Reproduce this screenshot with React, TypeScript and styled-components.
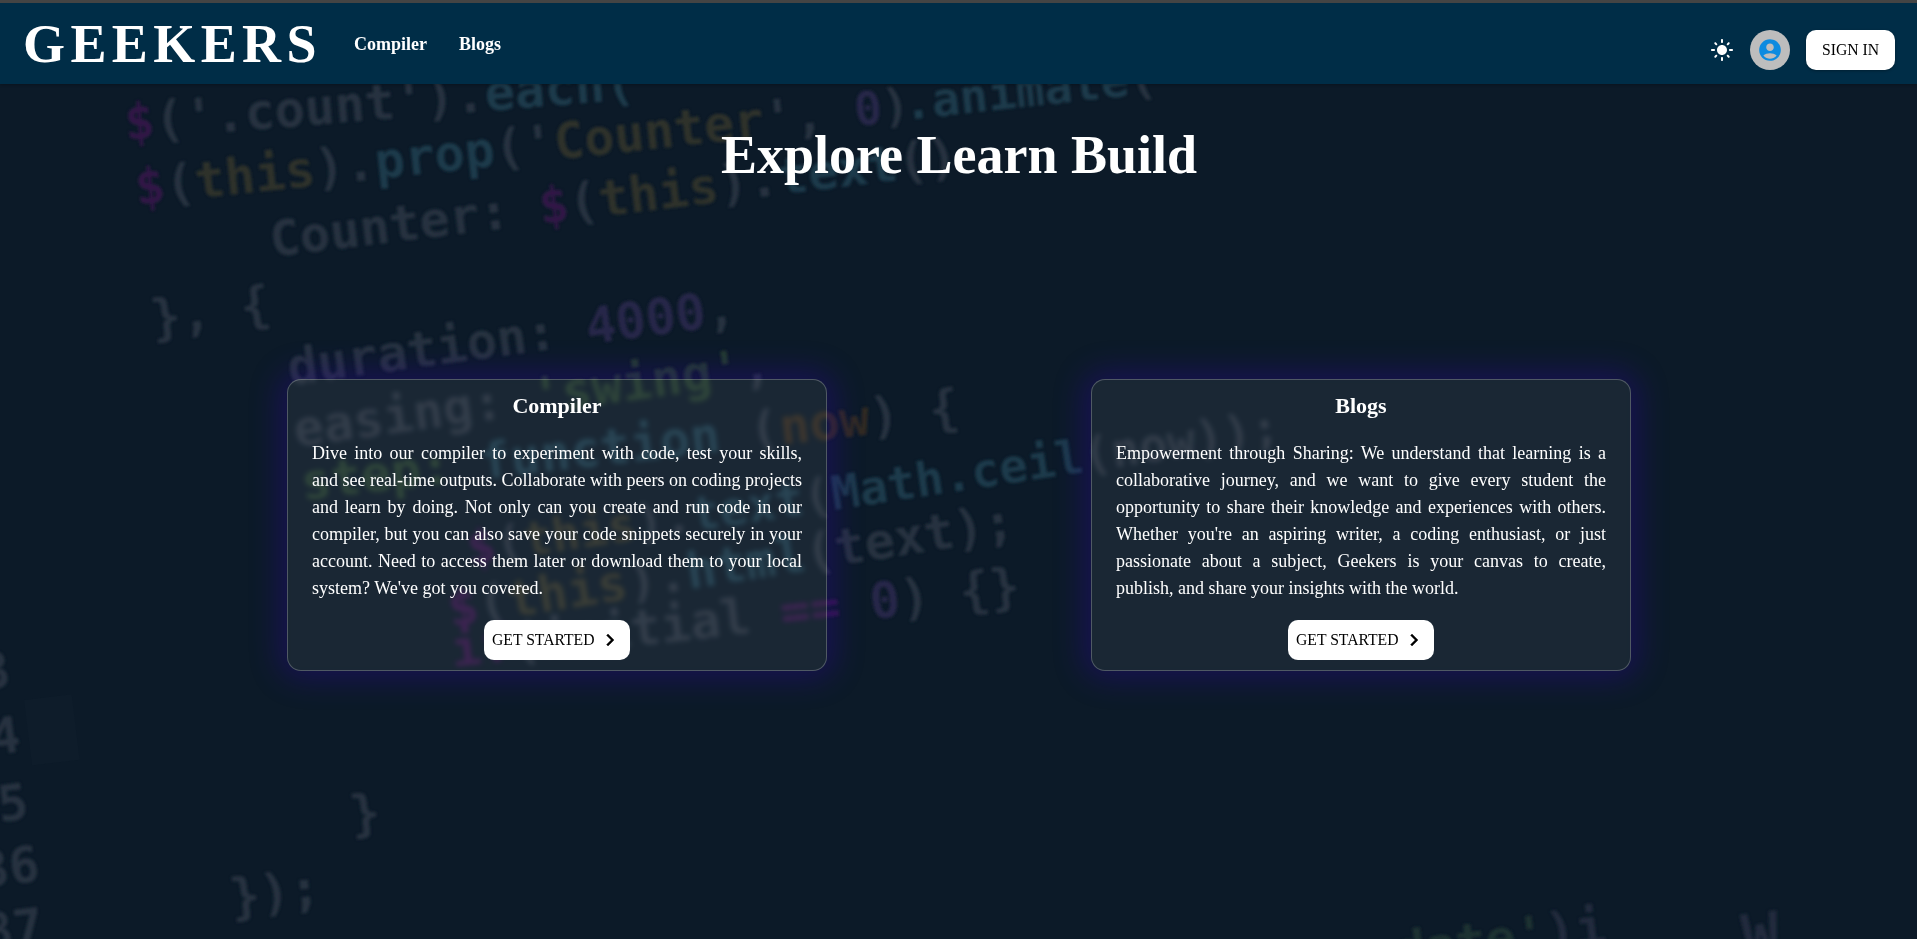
import React from 'react';
import styled, { createGlobalStyle } from 'styled-components';

// ----------
// Style
// ----------

const GlobalStyle = createGlobalStyle`
  html, body {
    margin: 0;
    padding: 0;
    height: 100%;
    background: #0c1a28;
    font-family: "Liberation Serif", "Times New Roman", serif;
    overflow: hidden;
  }
`;

const Page = styled.div`
  position: relative;
  height: 939px;
  overflow: hidden;
  display: flex;
  flex-direction: column;
`;

const Backdrop = styled.svg`
  position: absolute;
  inset: 0;
  width: 100%;
  height: 100%;
`;

const Navbar = styled.header`
  position: relative;
  height: 81px;
  border-top: 3px solid #444444;
  background: #002d47;
  box-shadow: 0 1px 3px rgba(0, 0, 0, 0.25);
  display: flex;
  align-items: flex-start;
  padding: 0 22px 0 23px;
`;

const Logo = styled.div`
  font-size: 54px;
  font-weight: 700;
  letter-spacing: 5.4px;
  line-height: 62px;
  margin-top: 10px;
  color: #ffffff;
`;

const NavLinks = styled.nav`
  display: flex;
  gap: 32px;
  margin-left: 32px;
  margin-top: 29px;
`;

const NavLink = styled.a`
  color: #ffffff;
  font-size: 18px;
  font-weight: 700;
  line-height: 24px;
`;

const NavActions = styled.div`
  margin-left: auto;
  margin-top: 27px;
  display: flex;
  align-items: center;
  gap: 16px;
`;

const ThemeToggle = styled.svg`
  width: 24px;
  height: 24px;
  fill: #ffffff;
`;

const Avatar = styled.div`
  width: 40px;
  height: 40px;
  border-radius: 50%;
  background: #bdbdbd;
  display: flex;
  align-items: center;
  justify-content: center;
`;

const AvatarIcon = styled.svg`
  width: 26px;
  height: 26px;
  fill: #0d8be0;
`;

const WhiteButton = styled.button`
  border: 0;
  background: #ffffff;
  color: #000000;
  border-radius: 10px;
  font-family: inherit;
  font-size: 15.7px;
  height: 40px;
  box-shadow: 0 1px 3px rgba(0, 0, 0, 0.3);
  display: inline-flex;
  align-items: center;
  justify-content: center;
`;

const SignIn = styled(WhiteButton)`
  width: 89px;
`;

const Main = styled.main`
  position: relative;
  flex: 1;
  display: flex;
  flex-direction: column;
  align-items: center;
`;

const Hero = styled.h1`
  margin: 34px 0 0 1px;
  color: #ffffff;
  font-size: 54px;
  font-weight: 700;
  line-height: 74px;
`;

const CardRow = styled.div`
  display: flex;
  gap: 264px;
  margin: 187px 0 0 1px;
`;

const Card = styled.section`
  width: 540px;
  height: 292px;
  box-sizing: border-box;
  padding: 12px 24px 0;
  border: 1px solid rgba(255, 255, 255, 0.24);
  border-radius: 14px;
  background: rgba(255, 255, 255, 0.058);
  box-shadow: 0 0 30px 8px rgba(48, 0, 170, 0.33);
  backdrop-filter: blur(2px);
  display: flex;
  flex-direction: column;
  align-items: center;
`;

const CardTitle = styled.h2`
  margin: 0;
  color: #ffffff;
  font-size: 22px;
  font-weight: 700;
  line-height: 28px;
`;

const CardText = styled.p`
  margin: 20px 0 0;
  color: #ffffff;
  font-size: 18px;
  line-height: 27px;
  text-align: justify;
`;

const GetStarted = styled(WhiteButton)`
  width: 146px;
  margin-top: 18px;
  gap: 3px;
  padding: 0 0 0 8px;
  justify-content: flex-start;
  box-shadow: none;
`;

const Chevron = styled.svg`
  width: 24px;
  height: 24px;
  fill: #000000;
  stroke: #000000;
  stroke-width: 0.4;
`;

// ----------
// Data
// ----------

const gray = '#283340';
const purple = '#301846';
const olive = '#2f3129';
const teal = '#1b3a4b';
const violet = '#282549';
const green = '#243a2e';
const orange = '#332b23';
const dimGreen = '#1f3230';
const dimGray = '#202a3c';

type CodeLine = {
  x: number;
  y: number;
  angle: number;
  size?: number;
  parts: [string, string][];
};

const codeLines: CodeLine[] = [
  { x: 126, y: 140, angle: -4.6, parts: [['$', purple], ["('", gray], ['.count', gray], ["').", gray], ['each(', teal]] },
  { x: 137, y: 205, angle: -6.2, parts: [['$', purple], ['(', gray], ['this', olive], [').', gray], ['prop', teal], ["('", gray], ['Counter', olive], ["',", gray]] },
  { x: 856, y: 126, angle: -6.2, parts: [['0', violet], [')', gray]], size: 46 },
  { x: 905, y: 120, angle: -6.2, parts: [['.animate', teal], ['(', gray]], size: 47 },
  { x: 272, y: 257, angle: -7, parts: [['Counter: ', gray], ['$', purple], ['(', gray], ['this', olive], [').', gray], ['text', teal], ['()', gray]] },
  { x: 153, y: 336, angle: -7.5, parts: [['}, {', gray]] },
  { x: 290, y: 385, angle: -7.8, parts: [['duration: ', gray], ['4000', violet], [',', gray]] },
  { x: 296, y: 447, angle: -7.9, parts: [['easing: ', gray], ["'swing'", green], [',', gray]] },
  { x: 303, y: 500, angle: -6.6, parts: [['step: ', green], ['function ', teal], ['(', gray], ['now', orange], [') {', gray]] },
  { x: 470, y: 565, angle: -8.6, size: 47, parts: [['$', purple], ['(', gray], ['this', olive], [').', gray], ['text', teal], ['(', gray], ['Math.ceil', teal], ['(now));', gray]] },
  { x: 451, y: 627, angle: -9, parts: [['$', purple], ['(', gray], ['this', olive], [').', gray], ['html', teal], ['(text);', gray]] },
  { x: 453, y: 667, angle: -6.5, parts: [['if', purple], ['(', gray], ['initial ', gray], ['==', purple], [' ', gray], ['0', violet], [') {}', gray]] },
  { x: 352, y: 832, angle: -7, parts: [['}', gray]] },
  { x: 232, y: 915, angle: -7, parts: [['});', gray]] },
  { x: -18, y: 690, angle: -7, parts: [['3', gray]] },
  { x: -8, y: 755, angle: -7, parts: [['4', gray]] },
  { x: 0, y: 822, angle: -7, parts: [['5', gray]] },
  { x: -19, y: 888, angle: -7, parts: [['36', gray]] },
  { x: -15, y: 950, angle: -7, parts: [['87', gray]] },
  { x: 1398, y: 968, angle: -7, parts: [['date', dimGreen], ["'", dimGreen], [')i', dimGray]] },
  { x: 1745, y: 960, angle: -7, size: 62, parts: [['W', dimGray]] },
];

const cards = [
  {
    title: 'Compiler',
    text: "Dive into our compiler to experiment with code, test your skills, and see real-time outputs. Collaborate with peers on coding projects and learn by doing. Not only can you create and run code in our compiler, but you can also save your code snippets securely in your account. Need to access them later or download them to your local system? We've got you covered.",
  },
  {
    title: 'Blogs',
    text: "Empowerment through Sharing: We understand that learning is a collaborative journey, and we want to give every student the opportunity to share their knowledge and experiences with others. Whether you're an aspiring writer, a coding enthusiast, or just passionate about a subject, Geekers is your canvas to create, publish, and share your insights with the world.",
  },
];

// ----------

const App: React.FC = () => (
  <Page>
    <GlobalStyle />
    <Backdrop viewBox="0 0 1917 939">
      <defs>
        <filter id="soft">
          <feGaussianBlur stdDeviation="1.5" />
        </filter>
      </defs>
      <rect x="24" y="700" width="48" height="66" fill="#0e1c2a" transform="rotate(-7 24 700)" />
      <g filter="url(#soft)" fontFamily="'DejaVu Sans Mono', monospace" fontSize="50" fontWeight="700">
        {codeLines.map((line) => (
          <text
            key={`${line.x}-${line.y}`}
            x={line.x}
            y={line.y}
            fontSize={line.size}
            transform={`rotate(${line.angle} ${line.x} ${line.y})`}
          >
            {line.parts.map(([part, color], i) => (
              <tspan key={i} fill={color} xmlSpace="preserve">
                {part}
              </tspan>
            ))}
          </text>
        ))}
      </g>
    </Backdrop>
    <Navbar>
      <Logo>GEEKERS</Logo>
      <NavLinks>
        <NavLink>Compiler</NavLink>
        <NavLink>Blogs</NavLink>
      </NavLinks>
      <NavActions>
        <ThemeToggle viewBox="0 0 24 24">
          <path d="M12 7c-2.76 0-5 2.24-5 5s2.24 5 5 5 5-2.24 5-5-2.24-5-5-5zM2 13h2c.55 0 1-.45 1-1s-.45-1-1-1H2c-.55 0-1 .45-1 1s.45 1 1 1zm18 0h2c.55 0 1-.45 1-1s-.45-1-1-1h-2c-.55 0-1 .45-1 1s.45 1 1 1zM11 2v2c0 .55.45 1 1 1s1-.45 1-1V2c0-.55-.45-1-1-1s-1 .45-1 1zm0 18v2c0 .55.45 1 1 1s1-.45 1-1v-2c0-.55-.45-1-1-1s-1 .45-1 1zM5.99 4.58c-.39-.39-1.03-.39-1.41 0-.39.39-.39 1.03 0 1.41l1.06 1.06c.39.39 1.03.39 1.41 0s.39-1.03 0-1.41L5.99 4.58zm12.37 12.37c-.39-.39-1.03-.39-1.41 0-.39.39-.39 1.03 0 1.41l1.06 1.06c.39.39 1.03.39 1.41 0 .39-.39.39-1.03 0-1.41l-1.06-1.06zm1.06-10.96c.39-.39.39-1.03 0-1.41-.39-.39-1.03-.39-1.41 0l-1.06 1.06c-.39.39-.39 1.03 0 1.41s1.03.39 1.41 0l1.06-1.06zM7.05 18.36c.39-.39.39-1.03 0-1.41-.39-.39-1.03-.39-1.41 0l-1.06 1.06c-.39.39-.39 1.03 0 1.41s1.03.39 1.41 0l1.06-1.06z" />
        </ThemeToggle>
        <Avatar>
          <AvatarIcon viewBox="0 0 24 24">
            <path d="M12 2C6.48 2 2 6.48 2 12s4.48 10 10 10 10-4.48 10-10S17.52 2 12 2zm0 4c1.93 0 3.5 1.57 3.5 3.5S13.93 13 12 13s-3.5-1.57-3.5-3.5S10.07 6 12 6zm0 14c-2.03 0-4.43-.82-6.14-2.88C7.55 15.8 9.68 15 12 15s4.45.8 6.14 2.12C16.43 19.18 14.03 20 12 20z" />
          </AvatarIcon>
        </Avatar>
        <SignIn>SIGN IN</SignIn>
      </NavActions>
    </Navbar>
    <Main>
      <Hero>Explore Learn Build</Hero>
      <CardRow>
        {cards.map((card) => (
          <Card key={card.title}>
            <CardTitle>{card.title}</CardTitle>
            <CardText>{card.text}</CardText>
            <GetStarted>
              GET STARTED
              <Chevron viewBox="0 0 24 24">
                <path d="M10 6 8.59 7.41 13.17 12l-4.58 4.59L10 18l6-6z" />
              </Chevron>
            </GetStarted>
          </Card>
        ))}
      </CardRow>
    </Main>
  </Page>
);

export default App;
